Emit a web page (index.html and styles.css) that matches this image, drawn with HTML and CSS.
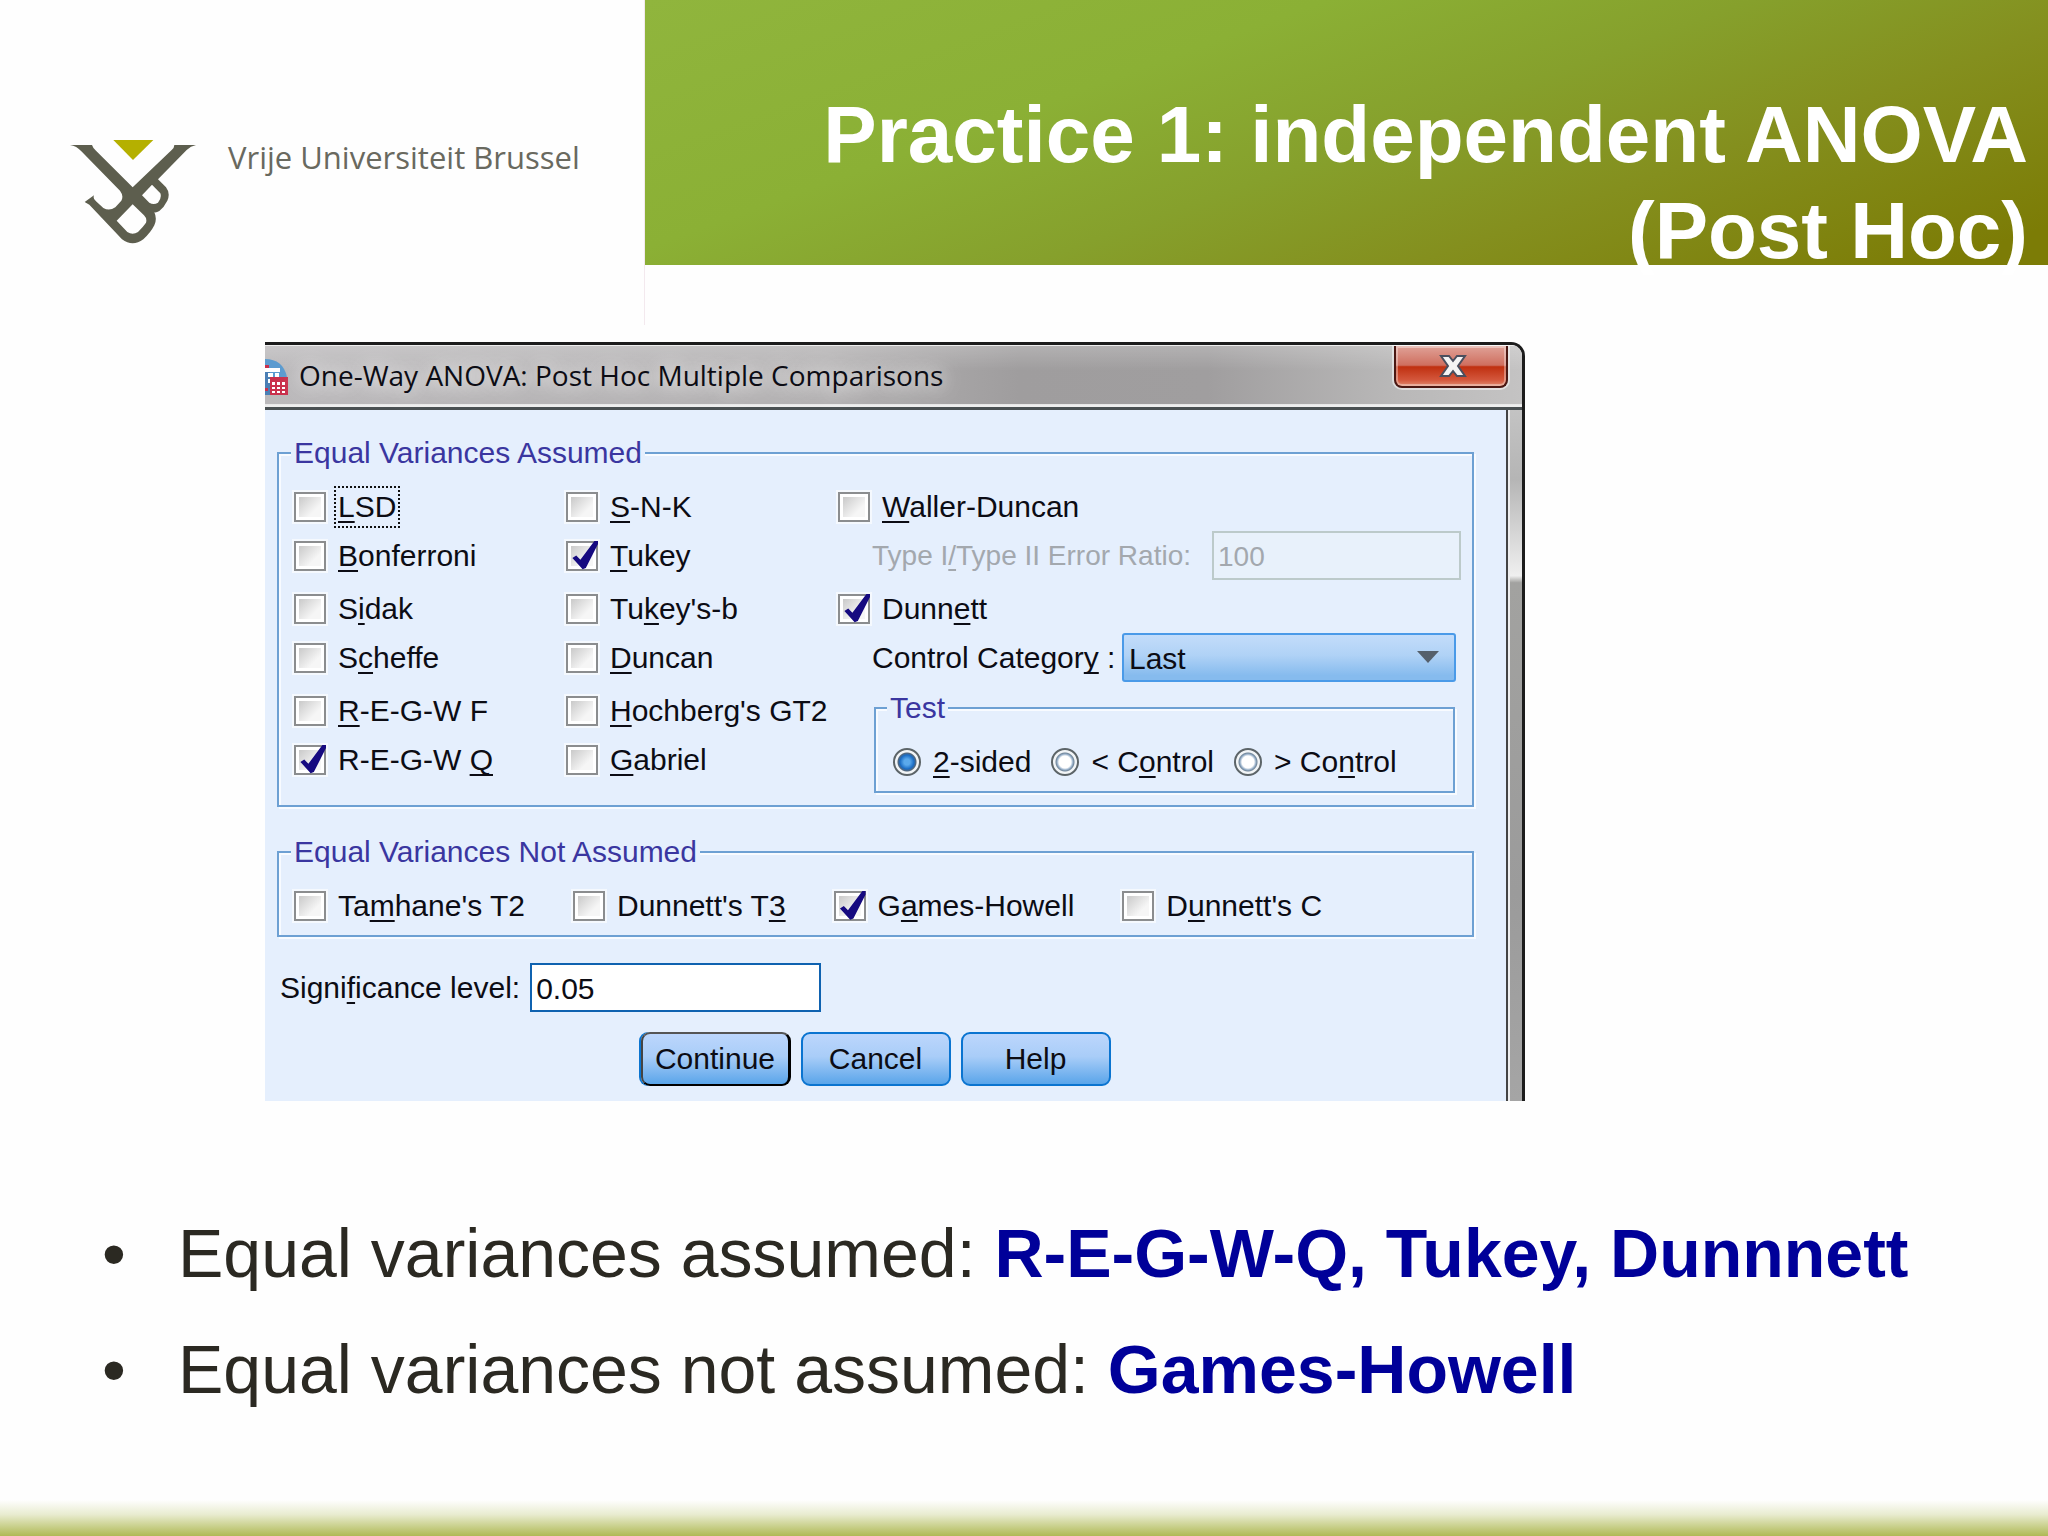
FILE: index.html
```html
<!DOCTYPE html>
<html lang="en">
    <head>
        <meta charset="UTF-8">
        <meta name="viewport" content="width=device-width, initial-scale=1.0">
        <title>Practice 1: independent ANOVA (Post Hoc)</title>
        <link rel="stylesheet" href="styles.css">
    </head>
    <body>
        <header class="header">
            <div class="brand">
                <svg class="logo" viewBox="30 32 378 312" aria-hidden="true">
                    <path fill="#b5b000" d="M160 32H280L219 92Z"/>
                    <path fill="#5d5e4e" fill-rule="evenodd" d="M30 47H96Q98 55 108 64L218 174L335 62Q343 55 343 47H408Q392 50 380 62L294 150L318 174Q332 192 322 214Q312 234 298 245Q290 250 283 249Q292 268 283 288Q272 310 250 330Q218 354 186 330L88 226L74 218L102 198Q98 208 108 216L130 236Q148 246 166 234L184 214Q192 200 180 184L64 66Q50 50 30 47ZM276 166L246 198L268 220Q281 228 294 220Q306 206 301 192ZM218 225L170 274L202 308Q218 318 234 308Q250 292 258 280Q262 268 252 258Z"/>
                </svg>
                <span class="brand-name">Vrije Universiteit Brussel</span>
            </div>
            <div class="banner">
                <h1>Practice 1: independent ANOVA<br>(Post Hoc)</h1>
            </div>
        </header>

        <main>
            <section class="dialog">
                <div class="titlebar">
                    <svg class="app-icon" viewBox="0 0 23 36" aria-hidden="true">
                        <path fill="#5b9bd0" d="M0 0Q18 0 22 18H0Z"/>
                        <path fill="#4b7fb5" d="M0 12H5V36H0Z"/>
                        <path fill="#fff" d="M0 9H15V13H0ZM3 14H8V18H3ZM10 14H14V18H10ZM3 20H5V24H3Z"/>
                        <path fill="#c9304c" d="M0 6H4V9H0ZM5 18H23V36H5ZM0 29H3V32H0Z"/>
                        <path fill="#fff" d="M7 23H10V26H7ZM12 23H15V26H12ZM17 23H20V26H17ZM7 28H10V30H7ZM12 28H15V30H12ZM17 28H20V30H17ZM7 32H10V34H7ZM12 32H15V34H12ZM17 32H20V34H17Z"/>
                    </svg>
                    <h2>One-Way ANOVA: Post Hoc Multiple Comparisons</h2>
                    <button class="close" type="button" aria-label="Close">
                        <svg viewBox="0 0 28 22" aria-hidden="true">
                            <path fill="#f4f4f4" stroke="#4b4f5e" stroke-width="2" d="M2 1H10L14 6L18 1H26L19 11L26 21H18L14 16L10 21H2L9 11Z"/>
                        </svg>
                    </button>
                </div>

                <div class="frame">
                    <form class="panel">
                        <fieldset>
                            <legend>Equal Variances Assumed</legend>
                            <div class="columns">
                                <div class="column">
                                    <label class="check"><input type="checkbox"><span class="focused"><u>L</u>SD</span></label>
                                    <label class="check"><input type="checkbox"><span><u>B</u>onferroni</span></label>
                                    <label class="check"><input type="checkbox"><span>S<u>i</u>dak</span></label>
                                    <label class="check"><input type="checkbox"><span>S<u>c</u>heffe</span></label>
                                    <label class="check"><input type="checkbox"><span><u>R</u>-E-G-W F</span></label>
                                    <label class="check"><input type="checkbox" checked><span>R-E-G-W <u>Q</u></span></label>
                                </div>
                                <div class="column">
                                    <label class="check"><input type="checkbox"><span><u>S</u>-N-K</span></label>
                                    <label class="check"><input type="checkbox" checked><span><u>T</u>ukey</span></label>
                                    <label class="check"><input type="checkbox"><span>Tu<u>k</u>ey's-b</span></label>
                                    <label class="check"><input type="checkbox"><span><u>D</u>uncan</span></label>
                                    <label class="check"><input type="checkbox"><span><u>H</u>ochberg's GT2</span></label>
                                    <label class="check"><input type="checkbox"><span><u>G</u>abriel</span></label>
                                </div>
                                <div class="column">
                                    <label class="check"><input type="checkbox"><span><u>W</u>aller-Duncan</span></label>
                                    <div class="sub-row disabled">
                                        <label for="ratio">Type I<u>/</u>Type II Error Ratio:</label>
                                        <input id="ratio" class="ratio" type="text" value="100" disabled>
                                    </div>
                                    <label class="check"><input type="checkbox" checked><span>Dunn<u>e</u>tt</span></label>
                                    <div class="sub-row">
                                        <label for="category">Control Categor<u>y</u> :</label>
                                        <div class="dropdown">
                                            <select id="category">
                                                <option>Last</option>
                                                <option>First</option>
                                            </select>
                                            <svg class="arrow" viewBox="0 0 22 12" aria-hidden="true">
                                                <path fill="#55606c" d="M0 0H22L11 12Z"/>
                                            </svg>
                                        </div>
                                    </div>
                                    <fieldset class="test">
                                        <legend>Test</legend>
                                        <div class="radios">
                                            <label class="check"><input type="radio" name="test" checked><span><u>2</u>-sided</span></label>
                                            <label class="check"><input type="radio" name="test"><span>&lt; C<u>o</u>ntrol</span></label>
                                            <label class="check"><input type="radio" name="test"><span>&gt; Co<u>n</u>trol</span></label>
                                        </div>
                                    </fieldset>
                                </div>
                            </div>
                        </fieldset>

                        <fieldset class="not-assumed">
                            <legend>Equal Variances Not Assumed</legend>
                            <div class="checks">
                                <label class="check"><input type="checkbox"><span>Ta<u>m</u>hane's T2</span></label>
                                <label class="check"><input type="checkbox"><span>Dunnett's T<u>3</u></span></label>
                                <label class="check"><input type="checkbox" checked><span>G<u>a</u>mes-Howell</span></label>
                                <label class="check"><input type="checkbox"><span>D<u>u</u>nnett's C</span></label>
                            </div>
                        </fieldset>

                        <div class="significance">
                            <label for="level">Signi<u>f</u>icance level:</label>
                            <input id="level" type="text" value="0.05">
                        </div>

                        <div class="buttons">
                            <button class="default" type="button">Continue</button>
                            <button type="button">Cancel</button>
                            <button type="button">Help</button>
                        </div>
                    </form>
                    <div class="edge"></div>
                </div>
            </section>

            <ul class="notes">
                <li><span>Equal variances assumed: <b>R-E-G-W-Q, Tukey, Dunnnett</b></span></li>
                <li><span>Equal variances not assumed: <b>Games-Howell</b></span></li>
            </ul>
        </main>

        <footer class="footer"></footer>
    </body>
</html>
```
FILE: styles.css
```css
* {
    box-sizing: border-box;
}
body {
    display: flex;
    flex-direction: column;
    min-height: 100vh;
    margin: 0;
    background-color: #fefefe;
    font-family: "Liberation Sans", Arial, sans-serif;
}

/* Header */
.header {
    display: grid;
    grid-template-columns: 645px 1fr;
    height: 325px;
}
.brand {
    display: flex;
    align-items: flex-start;
    gap: 32px;
    padding: 140px 0 0 70px;
    border-right: 1px solid #f3e9ee;
}
.logo {
    width: 126px;
    height: 104px;
}
.brand-name {
    color: #69695f;
    font-family: "Open Sans", "Noto Sans", sans-serif;
    font-size: 31px;
    line-height: 34px;
}
.banner {
    height: 265px;
    padding: 87px 20px 0 0;
    background: linear-gradient(160deg, #90b53d 0%, #8bb035 32%, #86a02c 52%, #848f1e 70%, #7c7c06 95%);
}
h1 {
    margin: 0;
    color: #fff;
    font-size: 80px;
    line-height: 96px;
    text-align: right;
}

/* Dialog window */
.dialog {
    margin: 17px 523px 0 265px;
    border-top: 3px solid #1c1c1c;
    border-right: 3px solid #1c1c1c;
    border-top-right-radius: 14px;
    color: #0c0c14;
    font-size: 30px;
    line-height: 34px;
    overflow: hidden;
}
.titlebar {
    display: flex;
    align-items: flex-start;
    height: 65px;
    padding-right: 14px;
    border-top: 1px solid #eee;
    border-bottom: 3px solid #4a5052;
    background:
        linear-gradient(180deg, rgba(255,255,255,0.2), rgba(255,255,255,0) 40%, rgba(255,255,255,0) 95%, #eee 96%),
        linear-gradient(90deg, #bbb9bb, #b3b1b2 45%, #9f9d9e 60%, #a09e9f 75%, #b9b8b8 90%, #c4c3c3);
}
.app-icon {
    width: 23px;
    height: 36px;
    margin-top: 13px;
}
h2 {
    margin: 10px 0 0 11px;
    font-family: "Open Sans", "Noto Sans", sans-serif;
    font-size: 28px;
    font-weight: 400;
    line-height: 38px;
    text-shadow: 0 0 24px #fff, 0 0 16px rgba(255,255,255,0.7);
}
.close {
    display: flex;
    align-items: center;
    justify-content: center;
    width: 114px;
    height: 42px;
    margin-left: auto;
    padding: 0 0 0 4px;
    border: 2px solid #4a1712;
    border-top: none;
    border-radius: 0 0 8px 8px;
    background: linear-gradient(#e0a298, #cf6f5f 48%, #c03010 52%, #d4573c 85%, #e08a70);
    box-shadow: 0 0 0 2px rgba(255,255,255,0.5), inset 0 0 0 2px rgba(255,255,255,0.35);
}
.close svg {
    width: 28px;
    height: 22px;
}
.frame {
    display: flex;
}
.edge {
    width: 14px;
    border-left: 2px solid #eee;
    background: linear-gradient(#c3c3c3, #b5b5b5 10%, #efefef 24%, #a2a2a0 25%, #9b9b9b 70%, #a5a5a5);
}
.panel {
    flex: 1;
    padding: 26px 32px 15px 12px;
    border-right: 2px solid #444;
    background-color: #e5effd;
}

/* Groups */
fieldset {
    min-width: 0;
    margin: 0;
    padding: 12px 11px 12px 12px;
    border: 2px solid #6da0d3;
    box-shadow: inset 2px 2px #f8fbff, 2px 2px #f8fbff;
}
legend {
    padding: 0 3px;
    background-color: #e5effd;
    color: #3a36a0;
}
.columns {
    display: grid;
    grid-template-columns: 272px 272px 1fr;
    padding-left: 3px;
}
.column > .check,
.sub-row {
    height: 49px;
}
.column > :nth-child(even) {
    margin-bottom: 4px;
}
.sub-row {
    display: flex;
    align-items: center;
    justify-content: space-between;
    padding-left: 34px;
    white-space: nowrap;
}
.disabled {
    color: #a3a8ae;
    font-size: 28px;
}
.column > .test {
    margin: 9px 6px 0 36px;
    padding: 20px 12px 12px 11px;
}
.not-assumed {
    margin-top: 28px;
    padding: 20px 12px 12px;
}
.checks {
    display: flex;
    gap: 48px;
    padding-left: 3px;
}
.radios {
    display: flex;
    gap: 20px;
    padding-left: 6px;
}

/* Controls */
.check {
    display: flex;
    align-items: center;
    gap: 12px;
    white-space: nowrap;
}
u {
    text-decoration-thickness: 2px;
    text-decoration-skip-ink: none;
    text-underline-offset: 4px;
}
.focused {
    outline: 2px dotted #111;
    outline-offset: 2px;
}
input,
select,
button {
    color: inherit;
    font: inherit;
}
input[type="checkbox"] {
    appearance: none;
    position: relative;
    width: 32px;
    height: 30px;
    margin: 0;
    padding: 3px;
    border: 2px solid #8b8d8f;
    background: linear-gradient(135deg, #c9c9c9, #f6f6f6 70%) content-box, #fff;
    box-shadow: 0 0 0 2px rgba(255,255,255,0.6);
}
input[type="checkbox"]:checked::after {
    content: "";
    position: absolute;
    inset: -2px;
    background-color: #160a80;
    clip-path: polygon(20% 58%, 32% 50%, 45% 64%, 90% 0, 100% 0, 100% 12%, 62% 92%, 52% 96%);
}
input[type="radio"] {
    appearance: none;
    width: 28px;
    height: 28px;
    margin: 0;
    border: 2px solid #5c6468;
    border-radius: 50%;
    background: radial-gradient(circle, #fff 6px, #8fa9c4 8px, #73879a 9px, #f2f5f7 10px);
}
input[type="radio"]:checked {
    background: radial-gradient(circle, #5aa9ec 3px, #1a6cc4 7px, #55677a 9px, #f2f5f7 10px);
}
input[type="text"] {
    height: 49px;
    padding: 2px 4px 0;
    border: 2px solid #0f62b0;
    background-color: #fff;
}
input[type="text"].ratio {
    width: 249px;
    border-color: #bccaca;
    background-color: #e8f1fb;
}
.dropdown {
    position: relative;
    width: 334px;
    margin-right: 5px;
}
select {
    appearance: none;
    display: block;
    width: 100%;
    height: 49px;
    padding: 2px 5px 0;
    border: 2px solid #4a9ae8;
    border-radius: 3px;
    background: linear-gradient(#c3dcfa, #b0d2f6 45%, #86bbee 90%);
}
.arrow {
    position: absolute;
    top: 18px;
    right: 17px;
    width: 22px;
    height: 12px;
    pointer-events: none;
}
.significance {
    display: flex;
    align-items: center;
    gap: 10px;
    margin-top: 26px;
    padding-left: 3px;
}
#level {
    width: 291px;
}
.buttons {
    display: flex;
    justify-content: center;
    gap: 10px;
    margin-top: 20px;
}
.buttons button {
    width: 150px;
    height: 54px;
    padding: 0;
    border: 2px solid #0a74d0;
    border-radius: 9px;
    background: linear-gradient(#bcd6fc, #a9cdf8 45%, #5aa5ea);
}
.buttons .default {
    border-color: #555 #000 #000 #444;
    border-right-width: 3px;
    box-shadow: -2px 0 #0a74d0;
}

/* Slide notes */
.notes {
    display: flex;
    flex-direction: column;
    gap: 36px;
    margin: 112px 0 0;
    padding: 0 0 0 102px;
    color: #2b2922;
    font-size: 68px;
    line-height: 80px;
    list-style: none;
}
.notes li {
    display: flex;
}
.notes li::before {
    content: "•";
    flex: 0 0 76px;
}
.notes b {
    color: #000099;
}
.footer {
    height: 36px;
    margin-top: auto;
    background: linear-gradient(#fefefe, #e9ecd0 40%, #afb955);
}
```
